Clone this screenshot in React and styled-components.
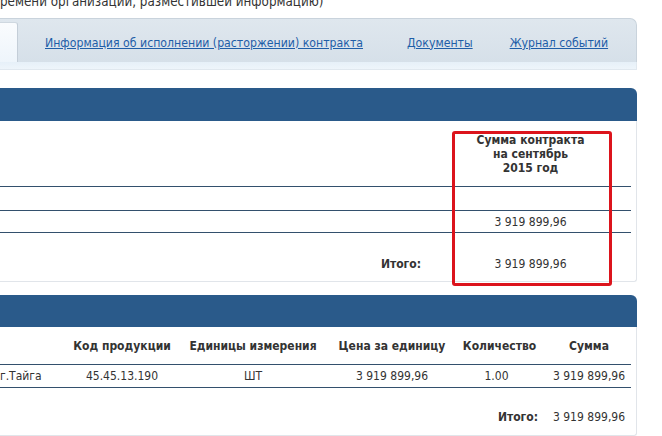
import React from 'react';
import styled, { createGlobalStyle } from 'styled-components';

const GlobalStyle = createGlobalStyle`
  html, body {
    margin: 0;
    padding: 0;
    background: #fff;
    overflow: hidden;
  }
  body {
    font-family: "DejaVu Sans Condensed", "DejaVu Sans", sans-serif;
    font-stretch: condensed;
    font-size: 12px;
    color: #333;
  }
`;

const Page = styled.div`
  width: 637px;
  height: 436px;
  overflow: hidden;
`;

const Note = styled.div`
  font-size: 13.3px;
  line-height: 16px;
  margin-top: -6px;
  color: #333;
  white-space: nowrap;
`;

const TabBar = styled.div`
  margin-top: 8px;
  height: 43px;
  display: flex;
  align-items: flex-end;
  background: linear-gradient(#dfe7ee, #d6e0e9);
  border: 1px solid #c9d3dc;
  border-left: none;
  border-bottom: none;
  border-top-right-radius: 7px;
`;

const ActiveTab = styled.div`
  width: 17px;
  height: 39px;
  background: linear-gradient(#fafcfe, #eef5fb);
  border-top: 1px solid #cfd8e0;
  border-right: 1px solid #c4ced8;
  border-top-right-radius: 3px;
`;

const Tabs = styled.div`
  display: flex;
  align-items: center;
  height: 39px;
  padding-left: 27px;
`;

const TabLink = styled.a`
  color: #1f5ea8;
  text-decoration: underline;
  font-size: 12.2px;
  cursor: pointer;
  margin-right: ${p => p.$gap || 0}px;
`;

const SubStrip = styled.div`
  height: 7px;
  background: linear-gradient(#e6f0f8, #eef5fb);
  border-bottom: 1px solid #e0e8ef;
  border-right: 1px solid #e0e8ef;
`;

const Panel = styled.div`
  margin-top: ${p => p.$top}px;
`;

const PanelHead = styled.div`
  height: ${p => p.$h}px;
  background: #2a5a8a;
  border-top-right-radius: 6px;
`;

const PanelBody = styled.div`
  position: relative;
  height: ${p => p.$h}px;
  border: 1px solid #e1e5ea;
  border-top: none;
  border-left: none;
  border-bottom-right-radius: 3px;
  background: #fff;
`;

const Table = styled.table`
  width: 631px;
  border-collapse: collapse;
  table-layout: fixed;
`;

const Th = styled.th`
  font-weight: bold;
  text-align: center;
  color: #333;
  line-height: 14px;
  padding: ${p => p.$pad || '0'};
  border-bottom: 1px solid #33506d;
  vertical-align: top;
  white-space: nowrap;
`;

const Td = styled.td`
  text-align: ${p => p.$align || 'center'};
  height: ${p => p.$h || 22}px;
  padding: ${p => p.$pad || '0'};
  color: #333;
  white-space: nowrap;
  vertical-align: ${p => p.$valign || 'middle'};
  border-bottom: ${p => (p.$line ? '1px solid #33506d' : 'none')};
  font-weight: ${p => (p.$bold ? 'bold' : 'normal')};
`;

const Highlight = styled.div`
  position: absolute;
  left: 452px;
  top: 10px;
  width: 154px;
  height: 149px;
  border: 3px solid #dc141c;
  border-radius: 3px;
  pointer-events: none;
`;

export default function App() {
  const head = '12px 0 11px';
  return (
    <Page>
      <GlobalStyle />
      <Note>ремени организации, разместившей информацию)</Note>
      <TabBar>
        <ActiveTab />
        <Tabs>
          <TabLink $gap={44}>Информация об исполнении (расторжении) контракта</TabLink>
          <TabLink $gap={37}>Документы</TabLink>
          <TabLink>Журнал событий</TabLink>
        </Tabs>
      </TabBar>
      <SubStrip />

      <Panel $top={18}>
        <PanelHead $h={33} />
        <PanelBody $h={160}>
          <Table>
            <colgroup>
              <col style={{ width: 430 }} />
              <col style={{ width: 201 }} />
            </colgroup>
            <tbody>
              <tr>
                <Th $pad="12px 0 11px" />
                <Th $pad="12px 0 11px">
                  Сумма контракта<br />на сентябрь<br />2015 год
                </Th>
              </tr>
              <tr>
                <Td $line $h={23} />
                <Td $line $h={23} />
              </tr>
              <tr>
                <Td $line $h={21} />
                <Td $line $h={21}>3 919 899,96</Td>
              </tr>
              <tr>
                <Td $h={62} $align="right" $pad="0 9px 0 0" $bold>Итого:</Td>
                <Td $h={62}>3 919 899,96</Td>
              </tr>
            </tbody>
          </Table>
          <Highlight />
        </PanelBody>
      </Panel>

      <Panel $top={13}>
        <PanelHead $h={32} />
        <PanelBody $h={108}>
          <Table>
            <colgroup>
              <col style={{ width: 62 }} />
              <col style={{ width: 120 }} />
              <col style={{ width: 142 }} />
              <col style={{ width: 136 }} />
              <col style={{ width: 87 }} />
              <col style={{ width: 84 }} />
            </colgroup>
            <tbody>
              <tr>
                <Th $pad={head} />
                <Th $pad={head}>Код продукции</Th>
                <Th $pad={head}>Единицы измерения</Th>
                <Th $pad={head}>Цена за единицу</Th>
                <Th $pad="12px 8px 11px 0">Количество</Th>
                <Th $pad={head}>Сумма</Th>
              </tr>
              <tr>
                <Td $line $align="left">г.Тайга</Td>
                <Td $line>45.45.13.190</Td>
                <Td $line>ШТ</Td>
                <Td $line>3 919 899,96</Td>
                <Td $line $pad="0 14px 0 0">1.00</Td>
                <Td $line>3 919 899,96</Td>
              </tr>
              <tr>
                <Td $h={58} colSpan={5} $align="right" $pad="0 9px 0 0" $bold>Итого:</Td>
                <Td $h={58}>3 919 899,96</Td>
              </tr>
            </tbody>
          </Table>
        </PanelBody>
      </Panel>
    </Page>
  );
}
